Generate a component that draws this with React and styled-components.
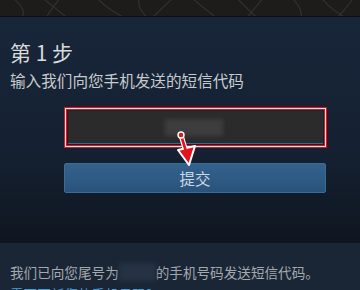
import React from 'react';
import styled, {createGlobalStyle} from 'styled-components';

const GlobalStyle = createGlobalStyle`
	html, body {
		margin: 0;
		padding: 0;
		background: #1b2838;
		font-family: "Noto Sans CJK SC", "Noto Sans", sans-serif;
	}
	#root {
		width: 360px;
		height: 290px;
		overflow: hidden;
	}
`;

const Page = styled.div`
	position: relative;
	width: 360px;
	height: 290px;
	overflow: hidden;
`;

const TopBar = styled.div`
	height: 16px;
	background: #1d1c1b;
	border-bottom: 1px solid #0e0e0e;
	overflow: hidden;
	svg {
		display: block;
	}
`;

const MainPanel = styled.div`
	height: 226px;
	box-sizing: border-box;
	padding: 22px 10px 0;
	background: linear-gradient(to bottom, #182639 0%, #152133 55%, #0f1620 100%);
`;

const Heading = styled.h1`
	margin: 0;
	font-size: 21px;
	line-height: 26px;
	font-weight: 400;
	color: #d9dadb;
`;

const SubTitle = styled.div`
	margin-top: 5px;
	font-size: 15.6px;
	line-height: 20px;
	color: #c7cbce;
	white-space: nowrap;
`;

const Form = styled.div`
	margin: 17px 0 0 54px;
	width: 263px;
	display: flex;
	flex-direction: column;
	gap: 15px;
`;

const Highlight = styled.div`
	padding: 3px;
	border: 1px solid #e3141d;
	box-shadow: inset 0 0 0 1px #fbe4e4, inset 0 0 0 2px #e3141d;
`;

const CodeInput = styled.div`
	height: 32px;
	background: #2b2b2b;
	border-bottom: 1px solid #2f6b95;
	display: flex;
	align-items: center;
	justify-content: center;
`;

const Blurred = styled.span`
	display: block;
	width: ${p => p.w}px;
	height: ${p => p.h}px;
	background: ${p => p.color};
	filter: blur(2px);
	margin-left: ${p => p.offset || 0}px;
`;

const SubmitButton = styled.button`
	height: 30px;
	width: 262px;
	border: 1px solid #3b6c96;
	border-radius: 2px;
	background: linear-gradient(to bottom, #33628d, #2a537b);
	color: #cbd7e1;
	font-family: inherit;
	font-size: 15.5px;
	padding: 0;
	cursor: pointer;
`;

const LowerPanel = styled.div`
	padding: 19px 10px 0;
	background: #1a2636;
`;

const Note = styled.div`
	display: flex;
	align-items: center;
	font-size: 13.6px;
	line-height: 20px;
	color: #a3a9ae;
	white-space: nowrap;
`;

const ChangeLink = styled.a`
	display: block;
	margin-top: 2px;
	font-size: 13.6px;
	line-height: 20px;
	color: #4b9fd5;
	text-decoration: none;
	white-space: nowrap;
`;

const Arrow = styled.svg`
	position: absolute;
	left: 0;
	top: 0;
	pointer-events: none;
`;

const curves = [
	'M10 -4 Q30 10 20 20', 'M40 -4 Q55 8 70 20', 'M62 -4 Q50 10 45 20',
	'M95 -4 Q110 12 130 20', 'M140 -4 Q135 8 150 20', 'M175 -4 Q160 10 150 20',
	'M190 -4 Q205 10 220 20', 'M235 -4 Q250 12 260 20', 'M265 -4 Q255 8 245 20',
	'M290 -4 Q305 10 300 20', 'M320 -4 Q330 10 350 20', 'M355 -4 Q345 10 335 20'
];

const App = () => (
	<Page>
		<GlobalStyle />
		<TopBar>
			<svg width="360" height="16" viewBox="0 0 360 16">
				{curves.map(d => (
					<path key={d} d={d} fill="none" stroke="#33312f" strokeWidth="1.2" />
				))}
			</svg>
		</TopBar>
		<MainPanel>
			<Heading>第 1 步</Heading>
			<SubTitle>输入我们向您手机发送的短信代码</SubTitle>
			<Form>
				<Highlight>
					<CodeInput>
						<Blurred w={58} h={17} color="#3d3d3d" offset={-4} />
					</CodeInput>
				</Highlight>
				<SubmitButton>提交</SubmitButton>
			</Form>
		</MainPanel>
		<LowerPanel>
			<Note>
				我们已向您尾号为
				<Blurred w={37} h={18} color="#243243" />
				的手机号码发送短信代码。
			</Note>
			<ChangeLink href="#">需要更新您的手机号码?</ChangeLink>
		</LowerPanel>
		<Arrow width="360" height="290" viewBox="0 0 360 290">
			<line x1="181" y1="135" x2="186" y2="152" stroke="#fff" strokeWidth="5" strokeLinecap="round" />
			<polygon points="178,150 195,146 189,165" fill="#e3141d" stroke="#fff" strokeWidth="2" strokeLinejoin="round" />
			<line x1="181" y1="135" x2="186.5" y2="153" stroke="#e3141d" strokeWidth="2.6" strokeLinecap="round" />
			<circle cx="181" cy="135" r="3" fill="#e3141d" stroke="#fff" strokeWidth="1.4" />
		</Arrow>
	</Page>
);

export default App;
